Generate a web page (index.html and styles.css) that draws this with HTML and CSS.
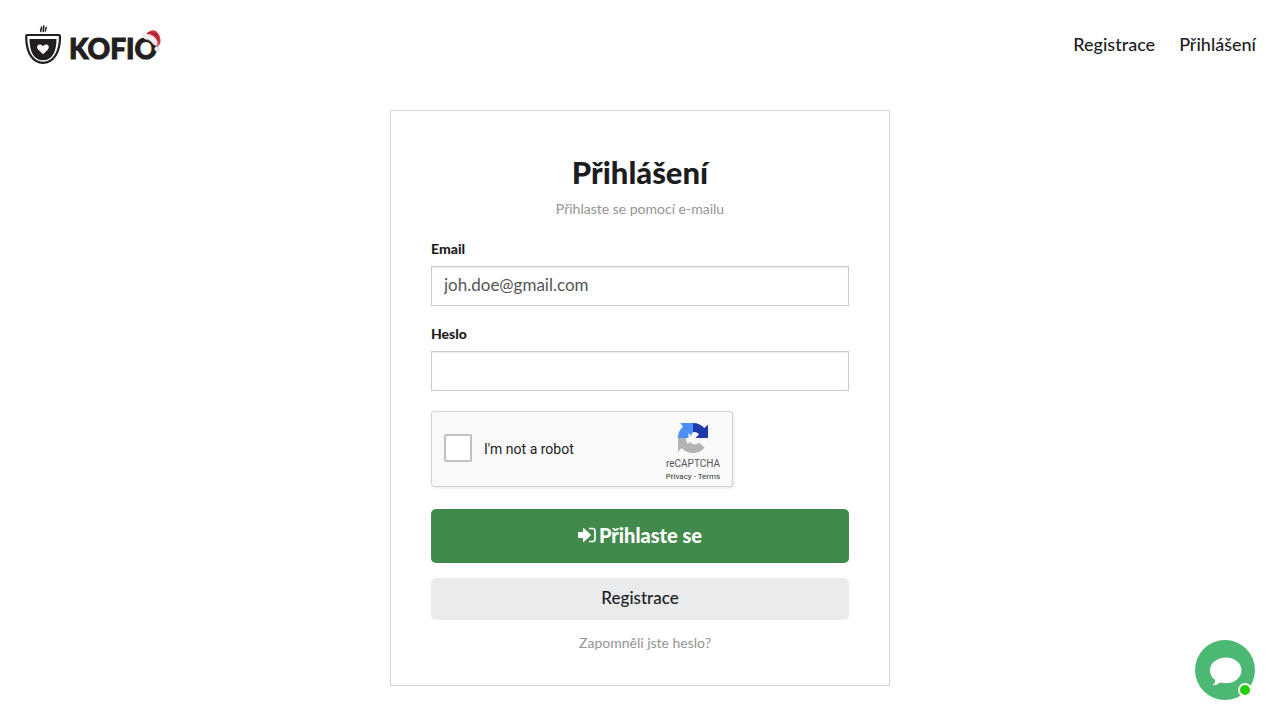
FILE: index.html
```html
<!DOCTYPE html>
<html lang="cs">
<head>
<meta charset="utf-8">
<meta name="viewport" content="width=device-width, initial-scale=1">
<title>Přihlášení</title>
<link rel="stylesheet" href="styles.css">
</head>
<body>
<header class="header">
  <a class="logo" href="#" aria-label="KOFIO">
    <svg width="140" height="40" viewBox="0 0 140 40">
      <path d="M2 10H34Q35 10 35 12C35 28 28 37.800 18 37.800S1.200 28 1.200 12Q1.200 10 2 10Z" fill="#fff" stroke="#231f20" stroke-width="2.200"/>
      <path d="M4.500 14H31.500C31.500 27 27 35.300 18 35.300S4.500 27 4.500 14Z" fill="#231f20"/>
      <path d="M18 29.300L13.300 24.700C11.300 22.500 12.300 19.800 14.600 19.600C16.300 19.400 17.400 20.400 18 21.500C18.600 20.400 19.700 19.400 21.400 19.600C23.700 19.800 24.700 22.500 22.700 24.700Z" fill="#fff"/>
      <path d="M16.300 7C14 5 17.600 3.800 16.300 1.500M18.800 7C16.500 4.800 20 3 18.400 0.300M20.600 6.500C19.300 4.800 22 3.800 20.800 1.800" fill="none" stroke="#231f20" stroke-width="1.500"/>
      <text class="logo-text" x="44" y="34">KOFIO</text>
      <path d="M121.500 9Q126 3.500 131 6Q136 10 135.500 18L132.500 22L129 14Z" fill="#d63847"/>
      <path d="M122 8.500Q127 6 131.500 11M130 8Q133 11 133 16" fill="none" stroke="#a9192c" stroke-width="1.200"/>
      <path d="M119.500 10.500Q123 7.500 129 12Q133.500 16 132 20Q129.500 21.500 127.500 18Q124.500 14 120 14Q117.500 12.500 119.500 10.500Z" fill="#f2eff1" stroke="#d5d1d4" stroke-width=".7"/>
      <circle cx="132" cy="24" r="2.300" fill="#f2eff1" stroke="#d5d1d4" stroke-width=".7"/>
    </svg>
  </a>
  <nav class="nav">
    <a href="#">Registrace</a>
    <a href="#">Přihlášení</a>
  </nav>
</header>
<main class="main">
  <form class="card">
    <h1 class="title">Přihlášení</h1>
    <p class="subtitle">Přihlaste se pomocí e-mailu</p>
    <label class="label" for="email">Email</label>
    <input class="field" id="email" type="email" value="joh.doe@gmail.com">
    <label class="label" for="password">Heslo</label>
    <input class="field" id="password" type="password">
    <div class="captcha">
      <input class="captcha-box" id="robot" type="checkbox">
      <label class="captcha-label" for="robot">I'm not a robot</label>
      <div class="captcha-brand">
        <svg width="32" height="32" viewBox="0 0 32 32" aria-hidden="true">
          <path d="M16 1V16H1C1 11 2.800 7.400 6 4.700L3.300 1Z" fill="#4a90f5"/>
          <path d="M16 1C21 1 24.700 3 27.300 6L31 2.700V16H16Z" fill="#1c3aa9"/>
          <path d="M1 16H18L21.500 20L27.500 25.500C24.500 29.300 21 31 16 31C11.500 31 7.500 29.300 4.700 26L1 29.700Z" fill="#b3b3b3"/>
          <path d="M11.500 11L14.500 14Q14.500 11 16 10.200Q19.500 9.500 22 12.300L18.500 16H24L22 20.500Q20 22.500 17.500 22.500Q14.500 22.200 13 20L10.500 22Q9 19.500 9 16H11.500Z" fill="#f9f9f9"/>
        </svg>
        <span class="captcha-name">reCAPTCHA</span>
        <span class="captcha-links"><a href="#">Privacy</a> - <a href="#">Terms</a></span>
      </div>
    </div>
    <button class="button button-primary" type="submit">
      <svg width="18" height="16" viewBox="0 0 18 16" aria-hidden="true">
        <path d="M0 5.500Q0 5 .6 5H5V1.500Q5.300.7 6 1.200L12.700 7.500Q13 8 12.700 8.500L6 14.800Q5.300 15.300 5 14.500V11H.6Q0 11 0 10.500Z" fill="#fff"/>
        <path d="M11 1.500H14.500Q17 1.500 17 4V12Q17 14.500 14.500 14.500H11" fill="none" stroke="#fff" stroke-width="1.700"/>
      </svg>
      <span>Přihlaste se</span>
    </button>
    <button class="button button-secondary" type="button">Registrace</button>
    <a class="forgot" href="#">Zapomněli jste heslo?</a>
  </form>
</main>
<button class="chat" type="button" aria-label="Chat">
  <svg width="60" height="60" viewBox="0 0 60 60" aria-hidden="true">
    <path d="M31 17.500C39.800 17.500 46.500 23 46.500 30.300S39.800 43.300 31 43.300Q27.500 43.300 25 42.500Q22 45.500 17.500 45.300Q20.500 43 20 40Q15 36.300 15 30.300C15 23 22 17.500 31 17.500Z" fill="#fff"/>
    <circle cx="50" cy="50" r="6" fill="#22d000" stroke="#fff" stroke-width="2"/>
  </svg>
</button>
</body>
</html>
```
FILE: styles.css
```css
* {
  box-sizing: border-box;
}

body {
  margin: 0;
  background: #fff;
  color: #1d1d1f;
  font-family: Lato, "Open Sans", sans-serif;
  font-size: 14px;
  line-height: 20px;
}

a {
  color: inherit;
  text-decoration: none;
}

.header {
  display: flex;
  align-items: center;
  justify-content: space-between;
  min-height: 90px;
  padding: 0 24px 0 25px;
}

.logo svg {
  display: block;
}

.logo-text {
  fill: #231f20;
  stroke: #231f20;
  stroke-width: 1px;
  font-size: 28px;
  font-weight: 900;
}

.nav {
  display: flex;
  gap: 24px;
  padding-bottom: 2px;
  font-size: 18px;
  font-weight: 500;
}

.main {
  padding: 20px 16px 32px;
}

.card {
  display: flex;
  flex-direction: column;
  max-width: 500px;
  margin: 0 auto;
  padding: 41px 40px 32px;
  border: 1px solid #d5d5d5;
}

.title {
  margin: 0 0 7px;
  font-size: 31px;
  font-weight: 900;
  line-height: 40px;
  text-align: center;
}

.subtitle {
  margin: 0 0 20px;
  color: #949494;
  text-align: center;
}

.label {
  margin-bottom: 7px;
  font-weight: 900;
}

.field {
  width: 100%;
  height: 40px;
  margin: 0 0 18px;
  padding: 0 12px 4px;
  border: 1px solid #ccc;
  border-radius: 0;
  box-shadow: inset 0 1px 1px rgba(0, 0, 0, .08);
  background: #fff;
  color: #555;
  font: inherit;
  font-size: 17px;
}

.captcha {
  display: flex;
  align-items: center;
  width: 302px;
  max-width: 100%;
  margin: 2px 0 22px;
  height: 76px;
  padding: 0 8px 0 12px;
  border: 1px solid #d3d3d3;
  border-radius: 3px;
  background: #f9f9f9;
  box-shadow: 1px 1px 3px rgba(0, 0, 0, .1);
  color: #222;
  font-family: Roboto, sans-serif;
}

.captcha-box {
  appearance: none;
  width: 28px;
  height: 28px;
  margin: 0 12px 2px 0;
  border: 2px solid #c1c1c1;
  border-radius: 2px;
  background: #fff;
}

.captcha-label {
  flex: 1;
}

.captcha-brand {
  display: flex;
  flex-direction: column;
  align-items: center;
  width: 62px;
  padding-top: 6px;
  color: #555;
}

.captcha-name {
  margin-top: 3px;
  font-size: 10px;
  line-height: 14px;
}

.captcha-links {
  font-size: 8px;
  line-height: 12px;
  color: #333;
}

.button {
  display: flex;
  align-items: center;
  justify-content: center;
  border: 0;
  border-radius: 5px;
  font-family: inherit;
}

.button-primary {
  gap: 3px;
  min-height: 54px;
  margin: 0 0 15px;
  padding-bottom: 3px;
  background: #418a4b;
  color: #fff;
  font-size: 20px;
  font-weight: 900;
}

.button-secondary {
  min-height: 42px;
  margin: 0 0 13px;
  padding-bottom: 5px;
  background: #eaebed;
  color: #1d1d1f;
  font-size: 17px;
  font-weight: 500;
}

.forgot {
  padding-left: 10px;
  color: #949494;
  text-align: center;
}

.chat {
  position: fixed;
  right: 25px;
  bottom: 20px;
  width: 60px;
  height: 60px;
  padding: 0;
  border: 0;
  border-radius: 50%;
  background: #4bb874;
}

.chat svg {
  display: block;
}
```
